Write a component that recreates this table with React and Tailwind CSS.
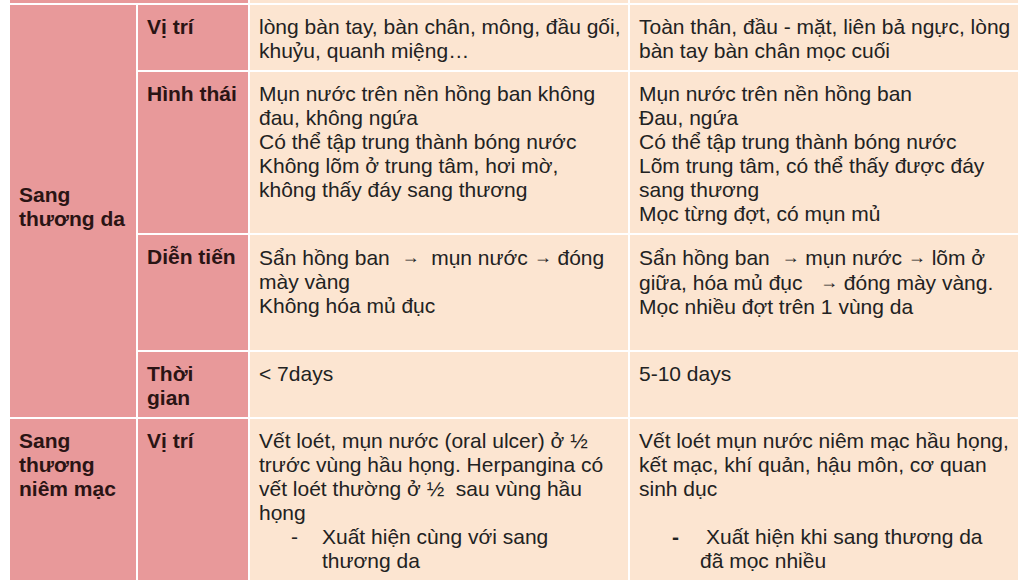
import React from "react";

const P = "bg-[#e8999a]";
const C = "bg-[#fce5d1]";
const head = `${P} px-[9px] pt-[10px] font-bold text-[#2a1414] whitespace-nowrap`;
const body = `${C} px-[9px] pt-[10px] text-[#222] whitespace-nowrap`;

const Ar = () => <span className="align-[2px] text-[18px]">→</span>;

export default function App() {
  return (
    <div
      className="w-[1024px] h-[585px] bg-white pl-[10px] overflow-hidden"
      style={{ fontFamily: '"Liberation Sans", Arial, sans-serif' }}
    >
      <div className="grid grid-cols-[126px_110px_378px_388px] grid-rows-[3px_65px_161px_115px_65px_161px] gap-[2px] text-[21px] leading-[24px]">
        <div className={`${P} col-span-2`} />
        <div className={C} />
        <div className={C} />

        <div className={`${P} row-span-4 px-[9px] font-bold text-[#2a1414] flex items-center pb-[8px]`}>
          <div>Sang<br />thương da</div>
        </div>
        <div className={head}>Vị trí</div>
        <div className={body}>lòng bàn tay, bàn chân, mông, đầu gối,<br />khuỷu, quanh miệng…</div>
        <div className={body}>Toàn thân, đầu - mặt, liên bả ngực, lòng<br />bàn tay bàn chân mọc cuối</div>

        <div className={head}>Hình thái</div>
        <div className={body}>
          Mụn nước trên nền hồng ban không<br />đau, không ngứa<br />Có thể tập trung thành bóng nước<br />Không lõm ở trung tâm, hơi mờ,<br />không thấy đáy sang thương
        </div>
        <div className={body}>
          Mụn nước trên nền hồng ban<br />Đau, ngứa<br />Có thể tập trung thành bóng nước<br />Lõm trung tâm, có thể thấy được đáy<br />sang thương<br />Mọc từng đợt, có mụn mủ
        </div>

        <div className={head}>Diễn tiến</div>
        <div className={body}>
          <span className="whitespace-pre">Sẩn hồng ban  <Ar />  mụn nước <Ar /> đóng</span><br />mày vàng<br />Không hóa mủ đục
        </div>
        <div className={body}>
          <span className="whitespace-pre">Sẩn hồng ban  <Ar /> mụn nước <Ar /> lõm ở</span><br />
          <span className="whitespace-pre">giữa, hóa mủ đục   <Ar /> đóng mày vàng.</span><br />Mọc nhiều đợt trên 1 vùng da
        </div>

        <div className={head}>Thời<br />gian</div>
        <div className={body}>&lt; 7days</div>
        <div className={body}>5-10 days</div>

        <div className={`${P} px-[9px] pt-[10px] font-bold text-[#2a1414] whitespace-nowrap`}>Sang<br />thương<br />niêm mạc</div>
        <div className={head}>Vị trí</div>
        <div className={body}>
          Vết loét, mụn nước (oral ulcer) ở ½<br />trước vùng hầu họng. Herpangina có<br />
          <span className="whitespace-pre">vết loét thường ở ½  sau vùng hầu</span><br />họng
          <div className="flex">
            <span className="w-[63px] pl-[32px]">-</span>
            <span>Xuất hiện cùng với sang<br />thương da</span>
          </div>
        </div>
        <div className={body}>
          Vết loét mụn nước niêm mạc hầu họng,<br />kết mạc, khí quản, hậu môn, cơ quan<br />sinh dục
          <div className="h-[24px]" />
          <div className="flex">
            <span className="w-[61px] pl-[33px] font-bold">-</span>
            <span><span className="pl-[6px]">Xuất hiện khi sang thương da</span><br />đã mọc nhiều</span>
          </div>
        </div>
      </div>
    </div>
  );
}
